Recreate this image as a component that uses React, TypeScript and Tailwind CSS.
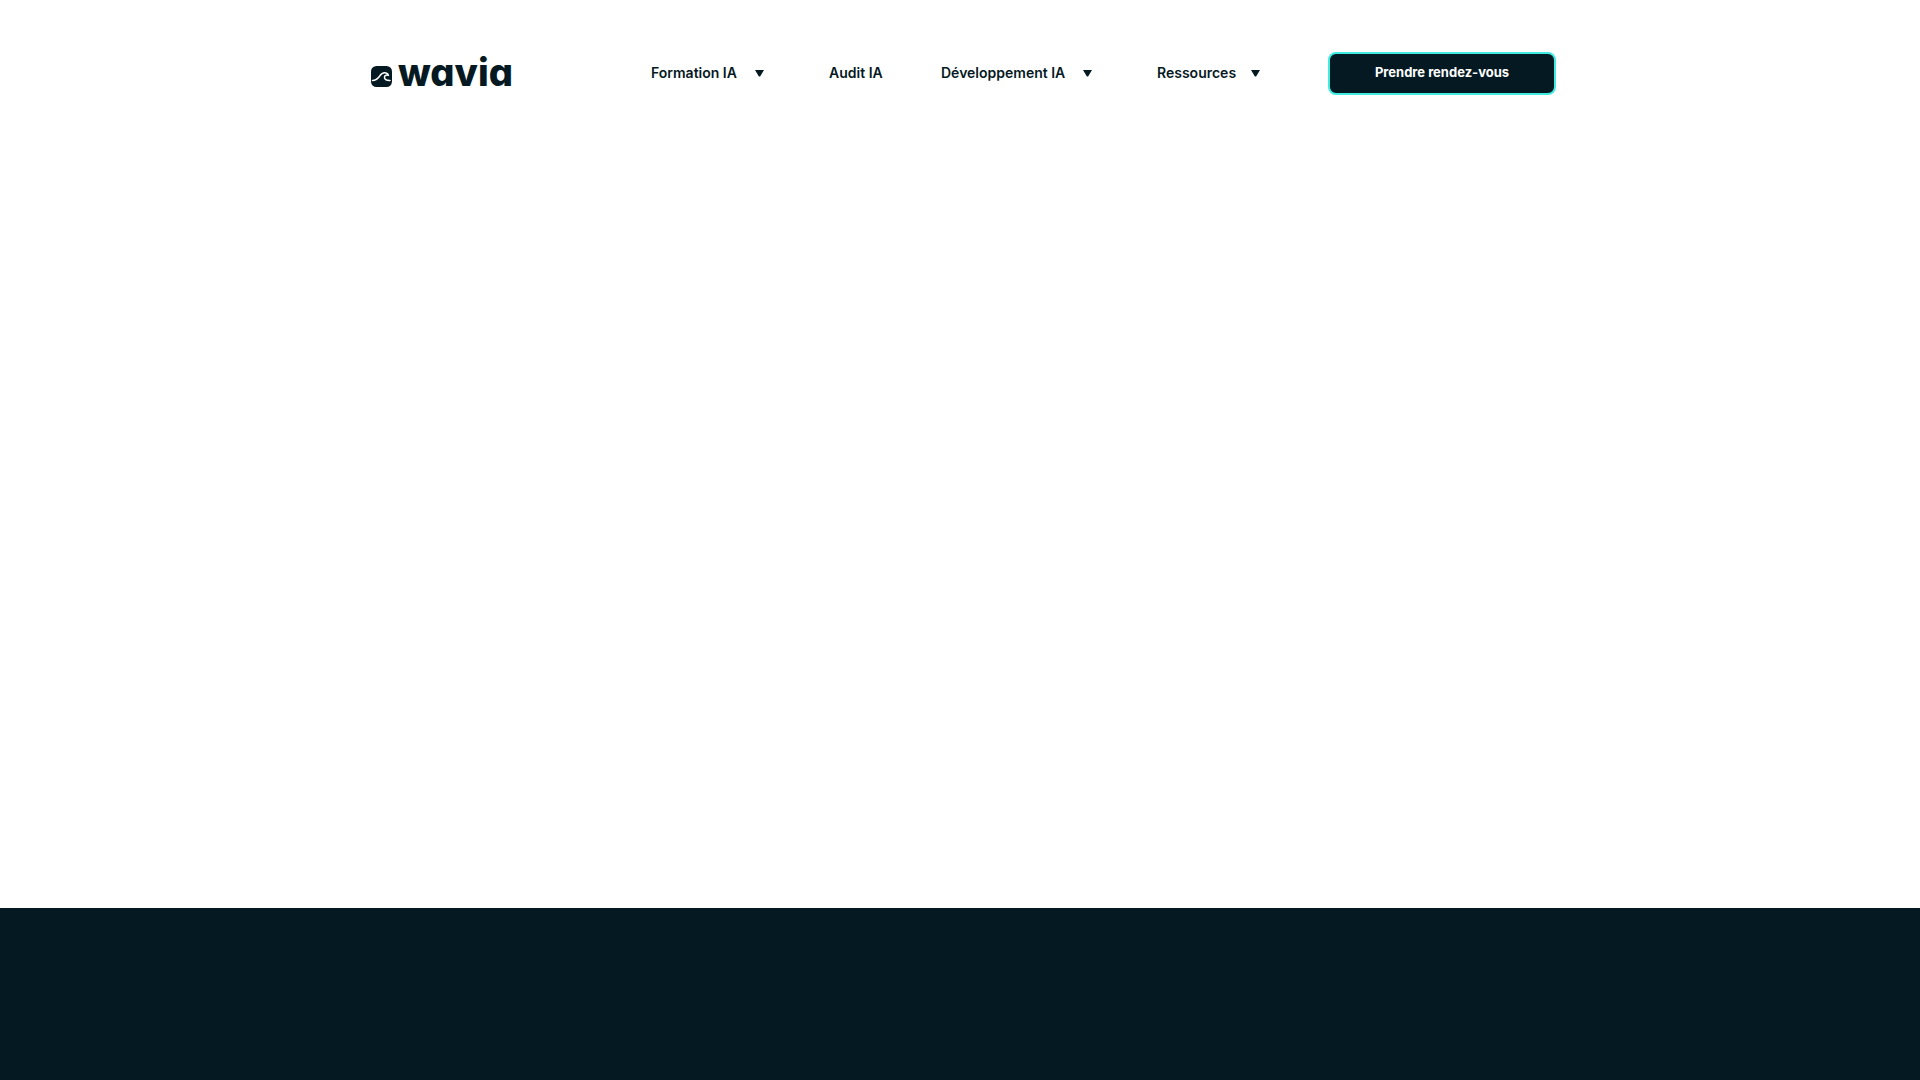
const links = [
  { label: 'Formation IA', menu: true, width: 'w-[113px]' },
  { label: 'Audit IA', menu: false, width: 'w-[55px]' },
  { label: 'Développement IA', menu: true, width: 'w-[151px]' },
  { label: 'Ressources', menu: true, width: 'w-[103px]' },
];

function Caret() {
  return (
    <svg className="h-2 w-[9px] shrink-0" viewBox="0 0 9 8" fill="currentColor" aria-hidden="true">
      <path d="M0 1h9L5.400 7a1 1 0 0 1-1.800 0z" />
    </svg>
  );
}

function Logo() {
  return (
    <a href="#" aria-label="wavia" className="flex items-center gap-1.5 pb-[3px]">
      <svg className="mt-2 h-[21px] w-[21px]" viewBox="0 0 21 21" fill="none" aria-hidden="true">
        <rect width="21" height="21" rx="5.5" fill="#051923" />
        <path
          d="M1.500 14.500c3.500 0 5.300-2 7.100-4.300C10.400 7.500 12.500 6.300 15 7c1.300.4 2.200 1.300 2.500 2.400-1.600-.7-3.700-.3-4 1.500-.4 2.200 1.600 3.600 5.500 3.500"
          stroke="white"
          strokeWidth="1.500"
          strokeLinecap="round"
          strokeLinejoin="round"
        />
      </svg>
      <span className="text-[38px] leading-10 font-extrabold [font-feature-settings:'cv11']">wavia</span>
    </a>
  );
}

export default function App() {
  return (
    <div className="flex min-h-screen flex-col bg-white font-['Inter',sans-serif] text-[#051923]">
      <header className="mx-auto mt-[52px] flex w-full max-w-[1200px] items-center pr-1 pl-[11px]">
        <Logo />
        <nav className="ml-auto flex items-center gap-[57px] pb-0.5">
          {links.map(({ label, menu, width }) =>
            menu ? (
              <button key={label} className="flex items-center pr-2 text-[14px] leading-5 font-semibold">
                <span className={`flex items-center justify-between whitespace-nowrap ${width}`}>
                  {label}
                  <Caret />
                </span>
              </button>
            ) : (
              <a key={label} href="#" className={`text-[14px] leading-5 font-semibold whitespace-nowrap ${width}`}>
                {label}
              </a>
            ),
          )}
        </nav>
        <button className="ml-[60px] h-[43px] w-[228px] rounded-lg border-2 border-[#40ebe2] bg-[#051923] pb-0.5 text-[13px] font-bold text-white">
          Prendre rendez-vous
        </button>
      </header>
      <main className="grow" />
      <footer className="h-[172px] bg-[#051923]" />
    </div>
  );
}
